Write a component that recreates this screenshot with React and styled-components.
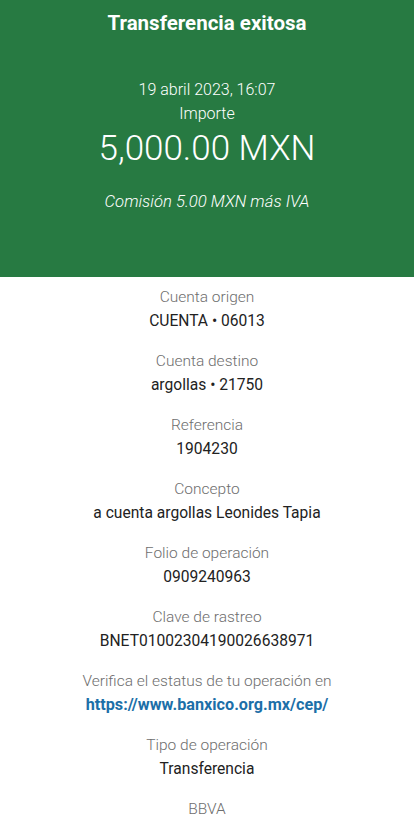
import React from 'react';
import styled, { createGlobalStyle } from 'styled-components';

const GlobalStyle = createGlobalStyle`
  html, body {
    margin: 0;
    padding: 0;
    background: #fff;
  }
  body {
    font-family: Roboto, "Liberation Sans", sans-serif;
  }
`;

const Page = styled.div`
  width: 414px;
  min-height: 829px;
  display: flex;
  flex-direction: column;
  background: #fff;
`;

const Header = styled.header`
  background: #277a42;
  color: #fff;
  height: 277px;
  box-sizing: border-box;
  padding-top: 10px;
  display: flex;
  flex-direction: column;
  align-items: center;
  text-align: center;
`;

const Title = styled.h1`
  margin: 0;
  font-size: 20.5px;
  line-height: 26px;
  font-weight: 700;
`;

const DateLine = styled.div`
  margin-top: 42px;
  font-size: 16px;
  line-height: 24px;
  font-weight: 300;
`;

const AmountLabel = styled.div`
  font-size: 16px;
  line-height: 24px;
  font-weight: 300;
`;

const Amount = styled.div`
  margin-top: 0;
  font-size: 35px;
  line-height: 46px;
  font-weight: 300;
`;

const Fee = styled.div`
  margin-top: 18px;
  font-size: 16.7px;
  line-height: 24px;
  font-weight: 300;
  font-style: italic;
`;

const Details = styled.section`
  display: flex;
  flex-direction: column;
  align-items: center;
  padding-top: 8px;
  gap: 16px;
  text-align: center;
`;

const Item = styled.div`
  display: flex;
  flex-direction: column;
  align-items: center;
`;

const Label = styled.div`
  font-size: 15.5px;
  line-height: 24px;
  font-weight: 300;
  color: #6e6e6e;
`;

const Value = styled.div`
  font-size: 15.6px;
  line-height: 24px;
  font-weight: 400;
  color: #222;
`;

const Link = styled.a`
  font-size: 16.2px;
  line-height: 24px;
  font-weight: 700;
  color: #1c6fa8;
  text-decoration: none;
`;

const rows = [
  ['Cuenta origen', 'CUENTA • 06013'],
  ['Cuenta destino', 'argollas • 21750'],
  ['Referencia', '1904230'],
  ['Concepto', 'a cuenta argollas Leonides Tapia'],
  ['Folio de operación', '0909240963'],
  ['Clave de rastreo', 'BNET01002304190026638971'],
];

export default function App() {
  return (
    <Page>
      <GlobalStyle />
      <Header>
        <Title>Transferencia exitosa</Title>
        <DateLine>19 abril 2023, 16:07</DateLine>
        <AmountLabel>Importe</AmountLabel>
        <Amount>5,000.00 MXN</Amount>
        <Fee>Comisión 5.00 MXN más IVA</Fee>
      </Header>
      <Details>
        {rows.map(([label, value]) => (
          <Item key={label}>
            <Label>{label}</Label>
            <Value>{value}</Value>
          </Item>
        ))}
        <Item>
          <Label>Verifica el estatus de tu operación en</Label>
          <Link href="#">https://www.banxico.org.mx/cep/</Link>
        </Item>
        <Item>
          <Label>Tipo de operación</Label>
          <Value>Transferencia</Value>
        </Item>
        <Item>
          <Label>BBVA</Label>
        </Item>
      </Details>
    </Page>
  );
}
